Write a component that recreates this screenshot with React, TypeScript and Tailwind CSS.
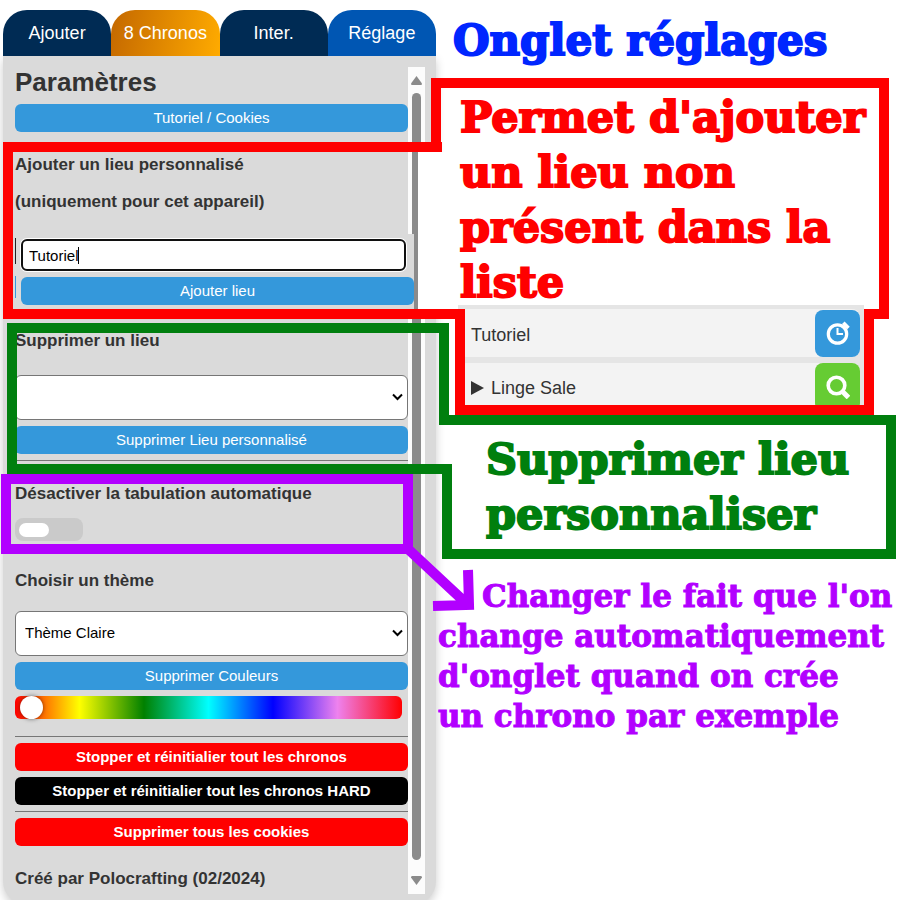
import React from "react";

const tabs = [
  { label: "Ajouter", look: "bg-[#002b54]" },
  { label: "8 Chronos", look: "bg-linear-100 from-[#c46800] to-[#ffab00]" },
  { label: "Inter.", look: "bg-[#002b54]" },
  { label: "Réglage", look: "bg-[#0056b3]" },
];

function PanelButton({ children, look }: { children: React.ReactNode; look: string }) {
  return (
    <button type="button" className={`block h-7 w-full rounded-md text-[15px] text-white ${look}`}>
      {children}
    </button>
  );
}

function PanelSelect({ id, options }: { id: string; options: string[] }) {
  return (
    <div className="relative">
      <select
        id={id}
        className="block h-[45px] w-full appearance-none rounded-md border border-[#767676] bg-white px-[9px] text-[15px] text-black"
      >
        {options.map((option) => (
          <option key={option}>{option}</option>
        ))}
      </select>
      <svg className="pointer-events-none absolute top-[18px] right-[5px]" width="11" height="8" viewBox="0 0 11 8" fill="none" stroke="#000" strokeWidth="2">
        <path d="M1 1.5 5.5 6 10 1.5" />
      </svg>
    </div>
  );
}

function Scrollbar() {
  return (
    <div className="flex w-[17px] shrink-0 flex-col items-center bg-[#fcfcfc] py-[9px]">
      <svg width="11" height="9" viewBox="0 0 11 9" fill="#8b8b8b">
        <path d="M5.5 0 11 7.5Q11 9 10 9H1Q0 9 0 7.5Z" />
      </svg>
      <div className="mt-2 mb-4 w-[9px] flex-1 rounded-full bg-[#8b8b8b]" />
      <svg width="11" height="9" viewBox="0 0 11 9" fill="#8b8b8b">
        <path d="M5.5 9 11 1.5Q11 0 10 0H1Q0 0 0 1.5Z" />
      </svg>
    </div>
  );
}

function SettingsPanel() {
  const label = "block text-[17px] leading-5 font-bold";
  return (
    <section className="ml-[3px] w-[433px] shrink-0 pt-2.5">
      <nav className="flex">
        {tabs.map((tab) => (
          <button key={tab.label} type="button" className={`h-[46px] flex-1 rounded-t-3xl text-lg text-white ${tab.look}`}>
            {tab.label}
          </button>
        ))}
      </nav>
      <div className="rounded-b-3xl bg-[#dadada] px-3 pt-[11px] pb-[11px] shadow-[0_4px_10px_rgba(0,0,0,0.2)]">
        <div className="-mr-px flex">
          <div className="h-[827px] min-w-0 flex-1 text-[#333]">
            <h1 className="text-[26px] leading-[30px] font-bold">Paramètres</h1>
            <div className="mt-[7px]">
              <PanelButton look="bg-[#3498db]">Tutoriel / Cookies</PanelButton>
            </div>

            <label htmlFor="lieu" className={`mt-[23px] ${label}`}>
              Ajouter un lieu personnalisé
              <span className="mt-[17px] block">(uniquement pour cet appareil)</span>
            </label>
            <div className="relative z-10 mt-[22px] -mr-1.5 ml-px flex h-[76px] flex-col gap-1.5 bg-[#dadada] pt-[5px] pl-[5px]">
              <span className="absolute top-1 -left-px h-[26px] w-px bg-[#222]" />
              <span className="absolute top-[42px] -left-px h-[22px] w-px bg-[#3498db]" />
              <input
                id="lieu"
                type="text"
                defaultValue="Tutoriel"
                className="mr-2 block h-8 rounded-md border-2 border-[#101010] bg-white px-1.5 text-[15px] text-black ring-1 ring-white outline-none"
              />
              <span className="absolute top-[13px] left-[62px] h-[17px] w-px bg-black" />
              <PanelButton look="bg-[#3498db]">Ajouter lieu</PanelButton>
            </div>

            <label htmlFor="supprimer" className={`mt-[21px] ${label}`}>
              Supprimer un lieu
            </label>
            <div className="mt-6 flex flex-col gap-1.5">
              <PanelSelect id="supprimer" options={[""]} />
              <PanelButton look="bg-[#3498db]">Supprimer Lieu personnalisé</PanelButton>
            </div>
            <hr className="mt-1.5 border-[#767676]" />

            <label className={`mt-[23px] ${label}`}>
              Désactiver la tabulation automatique
              <input type="checkbox" role="switch" className="peer sr-only" />
              <span className="mt-3.5 flex h-[23px] w-[68px] items-center rounded-lg bg-[#cacaca] px-1 peer-checked:justify-end">
                <span className="h-3.5 w-[30px] rounded-full bg-white" />
              </span>
            </label>

            <label htmlFor="theme" className={`mt-[30px] ${label}`}>
              Choisir un thème
            </label>
            <div className="mt-5 flex flex-col gap-1.5">
              <PanelSelect id="theme" options={["Thème Claire"]} />
              <PanelButton look="bg-[#3498db]">Supprimer Couleurs</PanelButton>
              <input
                type="range"
                aria-label="Couleur"
                min={0}
                max={360}
                defaultValue={5}
                className="mr-1.5 block h-[23px] appearance-none rounded-md bg-[linear-gradient(to_right,red,yellow,green,cyan,blue,violet,red)] [&::-webkit-slider-thumb]:size-[23px] [&::-webkit-slider-thumb]:appearance-none [&::-webkit-slider-thumb]:rounded-full [&::-webkit-slider-thumb]:bg-white [&::-webkit-slider-thumb]:shadow-[0_0_4px_rgba(0,0,0,0.5)]"
              />
            </div>
            <hr className="mt-[17px] border-[#767676]" />

            <div className="mt-1.5 flex flex-col gap-1.5">
              <PanelButton look="bg-[#f00] font-bold">Stopper et réinitialier tout les chronos</PanelButton>
              <PanelButton look="bg-black font-bold">Stopper et réinitialier tout les chronos HARD</PanelButton>
              <hr className="border-[#767676]" />
              <PanelButton look="bg-[#f00] font-bold">Supprimer tous les cookies</PanelButton>
            </div>
            <p className={`mt-[23px] ${label}`}>Créé par Polocrafting (02/2024)</p>
          </div>
          <Scrollbar />
        </div>
      </div>
    </section>
  );
}

function PlaceList() {
  return (
    <ul className="ml-[22px] flex h-[100px] w-[406px] flex-col gap-1.5 overflow-hidden bg-[#e5e5e5] pt-1 pr-1 text-lg text-[#333]">
      <li className="flex h-12 shrink-0 items-center justify-between rounded-lg bg-[#f3f3f3] pl-[13px]">
        <span className="pt-1">Tutoriel</span>
        <button type="button" aria-label="Lancer un chrono" className="flex h-[47px] w-[45px] items-center justify-center rounded-lg bg-[#3498db]">
          <svg width="24" height="24" viewBox="0 0 24 24" fill="none" stroke="#fff">
            <circle cx="11.5" cy="13" r="9.2" strokeWidth="3.2" />
            <path d="M11.5 7v6h5.5" strokeWidth="2" />
            <path d="M17.3 1.8 22.5 7" strokeWidth="3.6" />
          </svg>
        </button>
      </li>
      <li className="flex h-12 shrink-0 items-center justify-between rounded-lg bg-[#f3f3f3] pl-[13px]">
        <span className="flex items-center gap-[7px] pt-0.5">
          <svg width="13" height="14" viewBox="0 0 13 14" fill="#333">
            <path d="M0 0 13 7 0 14Z" />
          </svg>
          Linge Sale
        </span>
        <button type="button" aria-label="Rechercher" className="flex h-12 w-[45px] items-center justify-center rounded-lg bg-[#66cc33]">
          <svg width="24" height="24" viewBox="0 0 24 24" fill="none" stroke="#fff">
            <circle cx="10.5" cy="10.5" r="8.3" strokeWidth="3.6" />
            <path d="M16 16 22.5 22.5" strokeWidth="5" />
          </svg>
        </button>
      </li>
    </ul>
  );
}

function Notes() {
  const big = "text-[43px] leading-[55px] [-webkit-text-stroke:2px]";
  return (
    <section className="min-w-0 flex-1 font-['Cooper_Black','DejaVu_Serif',serif] font-bold whitespace-nowrap">
      <h2 className="pt-[13px] pl-[17px] text-[42px] leading-[55px] text-[#0026ff] [-webkit-text-stroke:2px]">Onglet réglages</h2>
      <p className={`mt-[22px] pl-6 text-[#f00] ${big}`}>
        Permet d'ajouter
        <br />
        un lieu non
        <br />
        présent dans la
        <br />
        liste
      </p>
      <div className="-mt-[5px] font-['Liberation_Sans',Arial,sans-serif] font-normal">
        <PlaceList />
      </div>
      <p className={`mt-[27px] pl-[50px] text-[#007f0e] ${big}`}>
        Supprimer lieu
        <br />
        personnaliser
      </p>
      <p className="mt-[34px] pl-0.5 indent-[44px] text-[31px] leading-10 text-[#b200ff] [-webkit-text-stroke:1px]">
        Changer le fait que l'on
        <br />
        change automatiquement
        <br />
        d'onglet quand on crée
        <br />
        un chrono par exemple
      </p>
    </section>
  );
}

function Markup() {
  return (
    <>
      <div className="pointer-events-none absolute top-[152px] left-[418px] h-[157px] w-7 bg-white" />
      <svg className="pointer-events-none absolute top-0 left-0 z-20" width="900" height="900" viewBox="0 0 900 900" fill="none" strokeWidth="10">
        <path stroke="#f00" d="M442 147H8V314H460V410H869V314H884V83H436V152" />
        <path stroke="#007f0e" d="M12 328H444V420H891V554H447V469H12Z" />
        <path stroke="#b200ff" d="M6 479H408V549H6ZM408 549 467 604M468 570 469 605 433 606" />
      </svg>
    </>
  );
}

export default function App() {
  return (
    <main className="relative flex h-screen overflow-hidden bg-white font-['Liberation_Sans',Arial,sans-serif]">
      <SettingsPanel />
      <Notes />
      <Markup />
    </main>
  );
}
